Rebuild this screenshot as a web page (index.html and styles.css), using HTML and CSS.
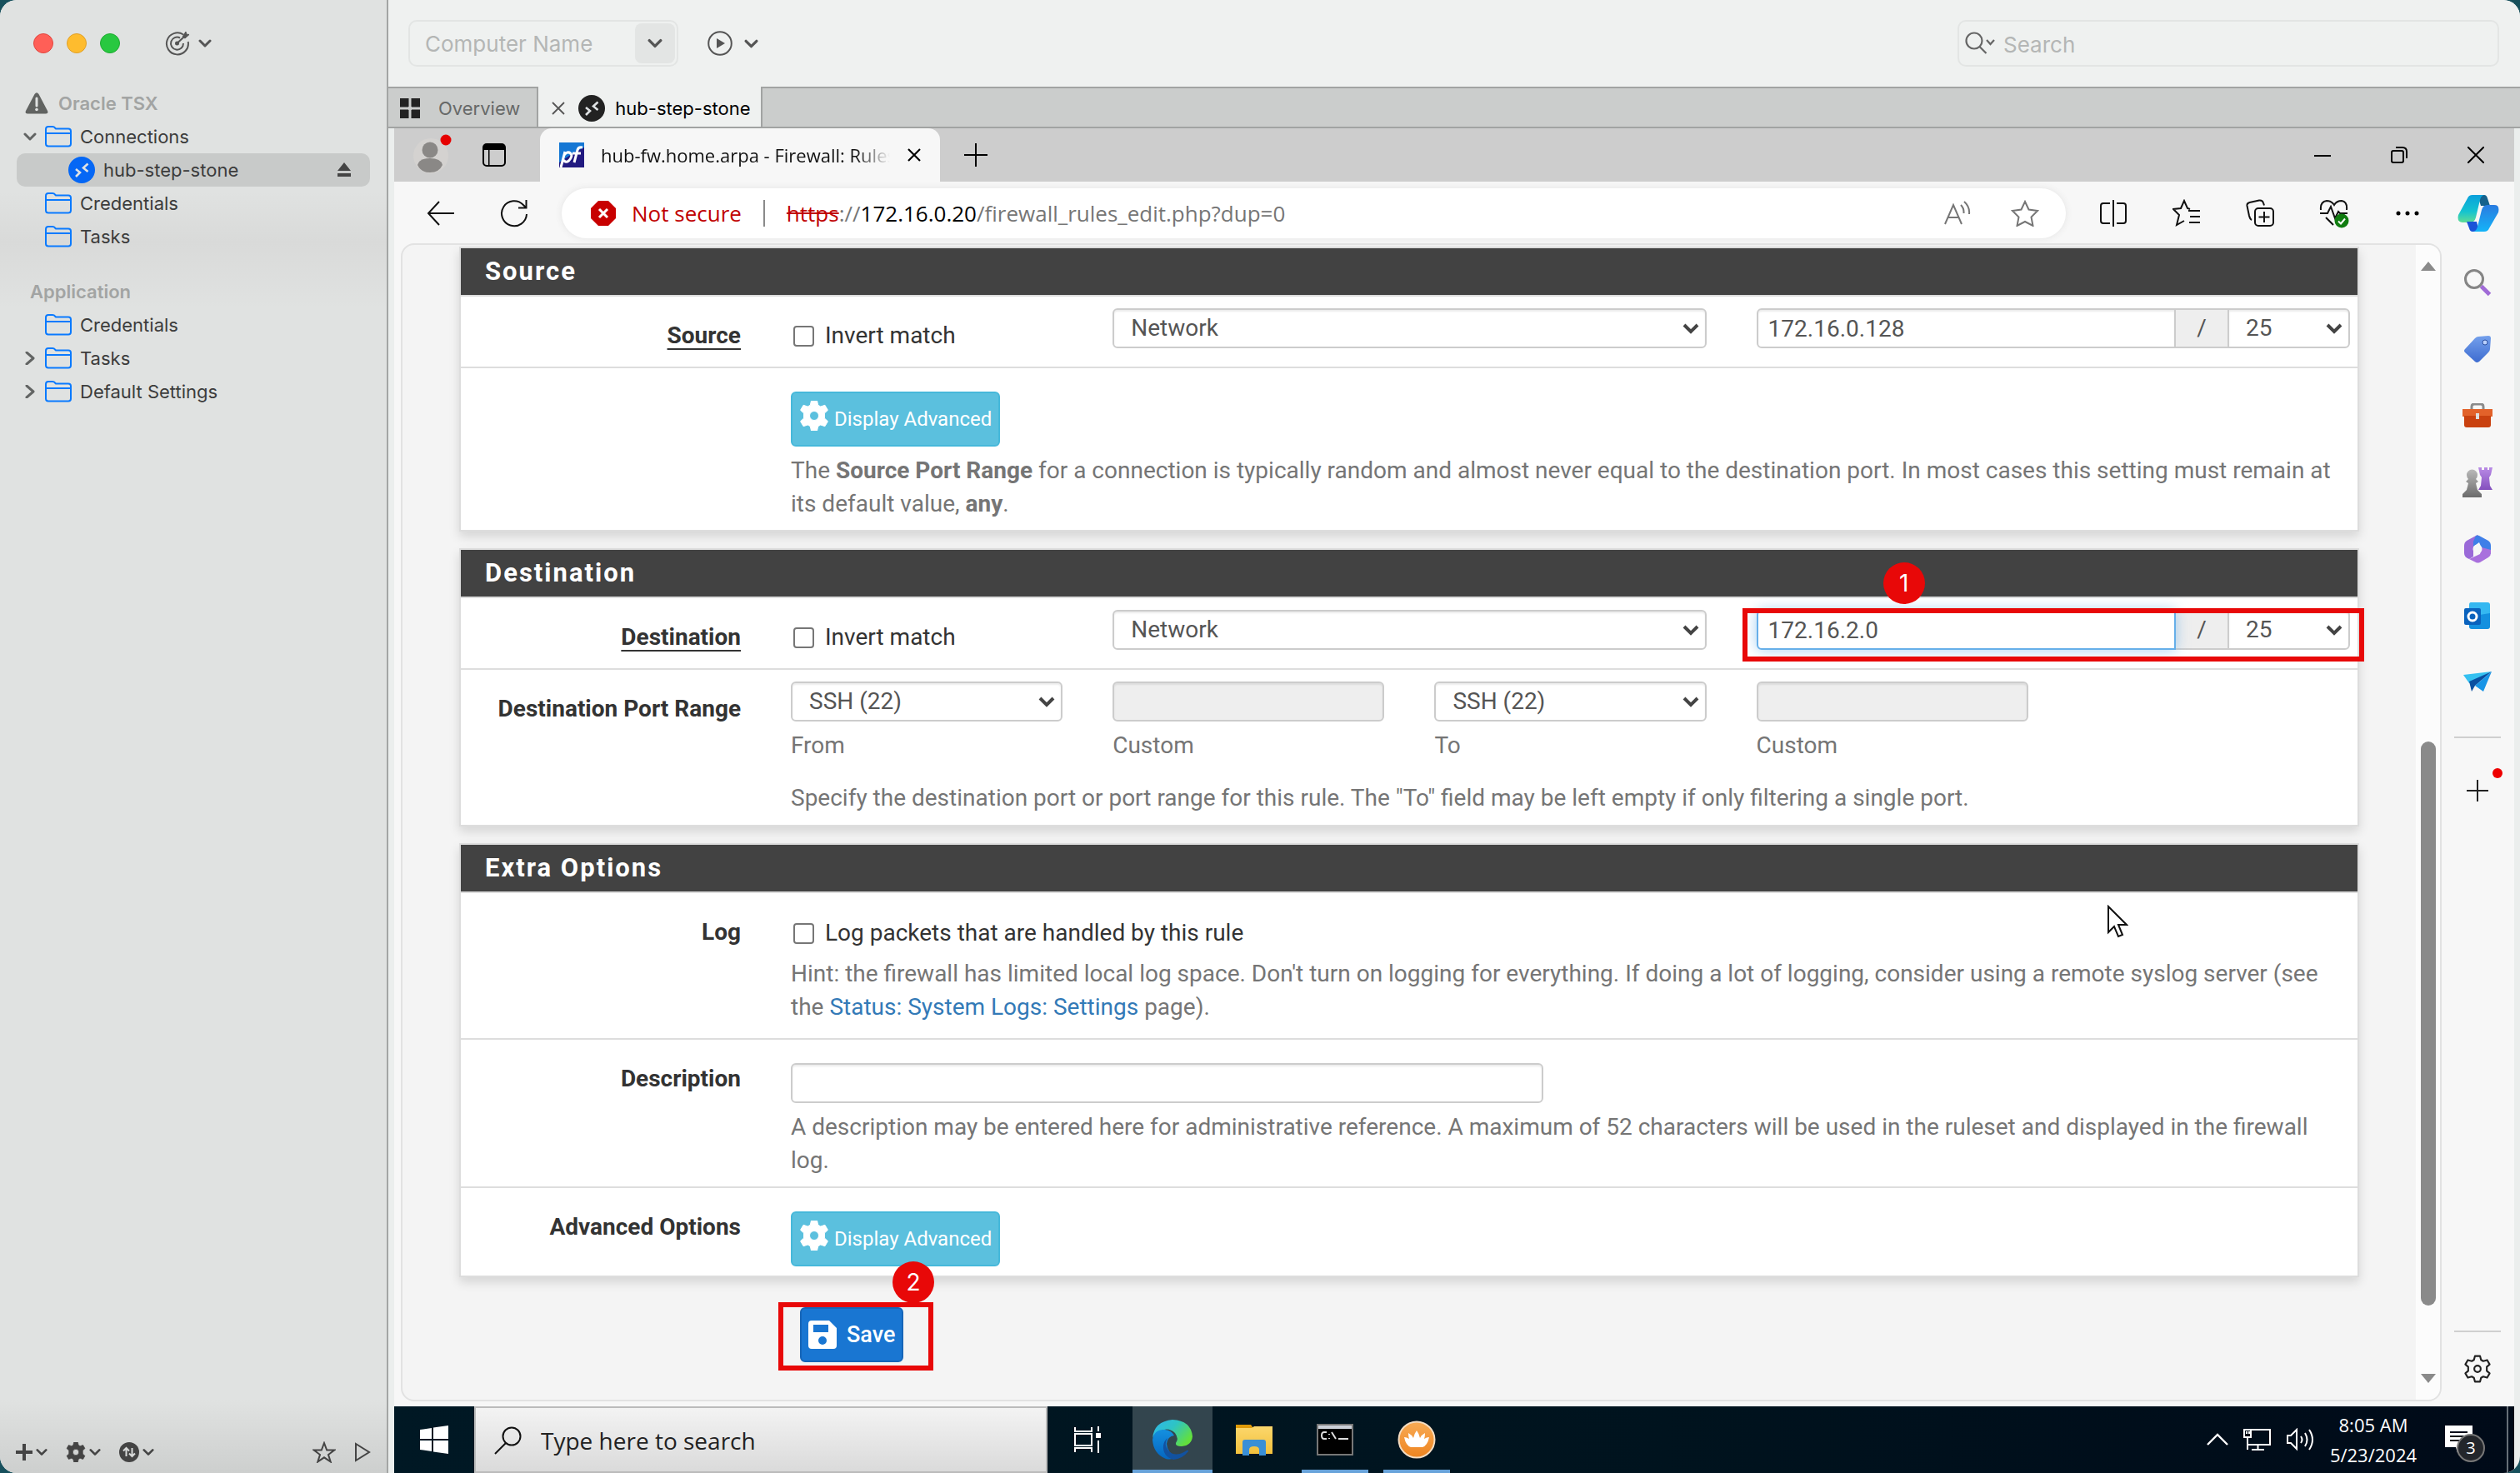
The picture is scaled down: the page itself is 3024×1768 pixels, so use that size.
FILE: index.html
```
<!DOCTYPE html>
<html lang="en">
<head>
<meta charset="utf-8">
<title>hub-step-stone</title>
<link rel="stylesheet" href="styles.css">
</head>
<body>
<svg class="defs" aria-hidden="true">
  <defs>
    <linearGradient id="g-teal" x1="0" y1="0" x2="0" y2="1"><stop offset="0" stop-color="#0aa0dc"/><stop offset=".6" stop-color="#14c3d0"/><stop offset="1" stop-color="#5fdc96"/></linearGradient>
    <linearGradient id="g-blue" x1="0" y1="0" x2="0" y2="1"><stop offset="0" stop-color="#2a7be0"/><stop offset="1" stop-color="#14b4f8"/></linearGradient>
    <linearGradient id="g-edge" x1="0" y1="0" x2="1" y2=".6"><stop offset="0" stop-color="#2fb6ee"/><stop offset=".5" stop-color="#2ec4c4"/><stop offset="1" stop-color="#63e03c"/></linearGradient>
    <linearGradient id="g-edge2" x1="0" y1="0" x2="0" y2="1"><stop offset="0" stop-color="#1490df"/><stop offset="1" stop-color="#0566c0"/></linearGradient>
    <linearGradient id="g-purple" x1="0" y1="0" x2="0" y2="1"><stop offset="0" stop-color="#b98be6"/><stop offset="1" stop-color="#8450bd"/></linearGradient>
    <linearGradient id="g-grey" x1="0" y1="0" x2="0" y2="1"><stop offset="0" stop-color="#b9b9b9"/><stop offset="1" stop-color="#6b6b6b"/></linearGradient>
    <linearGradient id="g-tag" x1="0" y1="0" x2="0" y2="1"><stop offset="0" stop-color="#74a0ec"/><stop offset="1" stop-color="#3e6cd0"/></linearGradient>
    <linearGradient id="g-orange" x1="0" y1="0" x2="0" y2="1"><stop offset="0" stop-color="#f8ab55"/><stop offset="1" stop-color="#ee8420"/></linearGradient>
    <linearGradient id="g-folder" x1="0" y1="0" x2="0" y2="1"><stop offset="0" stop-color="#fcd76c"/><stop offset="1" stop-color="#f2c03c"/></linearGradient>
    <symbol id="down" viewBox="0 0 16 16"><path d="M2 5l6 6 6-6" fill="none" stroke="currentColor" stroke-width="3" stroke-linecap="round" stroke-linejoin="round"/></symbol>
    <symbol id="right" viewBox="0 0 16 16"><path d="M4 1l8 7-8 7" fill="none" stroke="currentColor" stroke-width="3" stroke-linecap="round" stroke-linejoin="round"/></symbol>
    <symbol id="folder" viewBox="0 0 32 26"><path d="M1 9V4q0-3 3-3h5q2 0 3 1.500l1 1h15q3 0 3 3v15q0 3-3 3H4q-3 0-3-3zM1 9h30" fill="none" stroke="#0a7aff" stroke-width="2"/></symbol>
    <symbol id="rdp" viewBox="0 0 32 32"><circle cx="16" cy="16" r="16" fill="currentColor"/><path d="M9 15l5 4-5 5M23.500 8.500L18 13.500l5.500 4.500" fill="none" stroke="#dfe2e4" stroke-width="2.600"/></symbol>
    <symbol id="gear" viewBox="0 0 36 36"><path fill-rule="evenodd" d="M14.500 0h7l1.200 5.300 3 1.700 5.200-1.700 3.500 6-4 3.700v6l4 3.700-3.500 6-5.200-1.700-3 1.700-1.200 5.300h-7l-1.200-5.300-3-1.700-5.200 1.700-3.500-6 4-3.700v-6l-4-3.700 3.500-6L10.300 7l3-1.700zM18 12.500a5.500 5.500 0 1 0 0 11 5.500 5.500 0 0 0 0-11z" fill="currentColor" stroke="currentColor" stroke-width="1" stroke-linejoin="round"/></symbol>
  </defs>
</svg>

<div class="app">
  <nav class="sidebar" aria-label="Connections">
    <div class="window-bar">
      <button class="light light-red" aria-label="Close"></button>
      <button class="light light-amber" aria-label="Minimize"></button>
      <button class="light light-green" aria-label="Zoom"></button>
      <button class="plain target" aria-label="Target">
        <svg width="30" height="30" viewBox="0 0 30 30" fill="none" stroke="currentColor" stroke-width="2"><path d="M22 4.500A13 13 0 1 0 27.700 13"/><path d="M18 8.500A7.500 7.500 0 1 0 22 15"/><circle cx="14.500" cy="15" r="1.500" fill="currentColor"/><path d="M14.500 15L23 7"/><path d="M21 7l4-6 .5 3 3.500.5-5 4.500z" fill="currentColor" stroke-width="1"/></svg>
        <svg width="16" height="16"><use href="#down"/></svg>
      </button>
    </div>
    <div class="tree">
      <h2 class="group group-first">
        <svg width="28" height="26" viewBox="0 0 28 26"><path d="M11.500 2q2.500-3.500 5 0l10.500 20q1.500 3.500-2 3.500H3q-3.500 0-2-3.500z" fill="#616361"/><path d="M14 7v9" stroke="#e0e2e1" stroke-width="3" stroke-linecap="round"/><circle cx="14" cy="20.500" r="1.800" fill="#e0e2e1"/></svg>
        Oracle TSX</h2>
      <a class="node" href="#"><svg class="twist" width="16" height="16"><use href="#down"/></svg><svg width="32" height="26"><use href="#folder"/></svg>Connections</a>
      <a class="node node-selected" href="#"><svg class="rdp" width="32" height="32"><use href="#rdp"/></svg>hub-step-stone<svg class="eject" width="18" height="20" viewBox="0 0 18 20"><path d="M9 1l8 10H1zM1 14h16v4H1z" fill="#444"/></svg></a>
      <a class="node" href="#"><span class="twist"></span><svg width="32" height="26"><use href="#folder"/></svg>Credentials</a>
      <a class="node" href="#"><span class="twist"></span><svg width="32" height="26"><use href="#folder"/></svg>Tasks</a>
      <h2 class="group">Application</h2>
      <a class="node" href="#"><span class="twist"></span><svg width="32" height="26"><use href="#folder"/></svg>Credentials</a>
      <a class="node" href="#"><svg class="twist" width="16" height="16"><use href="#right"/></svg><svg width="32" height="26"><use href="#folder"/></svg>Tasks</a>
      <a class="node" href="#"><svg class="twist" width="16" height="16"><use href="#right"/></svg><svg width="32" height="26"><use href="#folder"/></svg>Default Settings</a>
    </div>
    <div class="side-tools">
      <button class="plain" aria-label="Add"><svg width="20" height="20" viewBox="0 0 20 20"><path d="M10 0v20M0 10h20" stroke="currentColor" stroke-width="4"/></svg><svg width="14" height="14"><use href="#down"/></svg></button>
      <button class="plain" aria-label="Settings"><svg width="24" height="24"><use href="#gear"/></svg><svg width="14" height="14"><use href="#down"/></svg></button>
      <button class="plain" aria-label="Sort"><svg width="24" height="24" viewBox="0 0 24 24"><circle cx="12" cy="12" r="12" fill="currentColor"/><path d="M8.500 17V7M5 10.500L8.500 7l3.500 3.500M15.500 7v10M12 13.500l3.500 3.500 3.500-3.500" fill="none" stroke="#d8dad9" stroke-width="2"/></svg><svg width="14" height="14"><use href="#down"/></svg></button>
      <button class="plain push" aria-label="Favorite"><svg width="28" height="26" viewBox="0 0 28 26"><path d="M14 2l3.200 8.500h9l-7.200 5.500 2.700 8.500-7.700-5.200-7.700 5.200L9 16l-7.200-5.500h9z" fill="none" stroke="currentColor" stroke-width="2"/></svg></button>
      <button class="plain" aria-label="Run"><svg width="20" height="24" viewBox="0 0 20 24"><path d="M2 2v20l16-10z" fill="none" stroke="currentColor" stroke-width="2"/></svg></button>
    </div>
  </nav>

  <main class="main">
    <header class="toolbar">
      <div class="computer">
        <input type="text" placeholder="Computer Name" aria-label="Computer Name">
        <button class="computer-drop" aria-label="Choose computer"><svg width="18" height="18"><use href="#down"/></svg></button>
      </div>
      <button class="plain play" aria-label="Connect">
        <svg width="30" height="30" viewBox="0 0 30 30"><circle cx="15" cy="15" r="13.800" fill="none" stroke="currentColor" stroke-width="2"/><path d="M11 9v12l10-6z" fill="currentColor"/></svg>
        <svg width="17" height="17"><use href="#down"/></svg>
      </button>
      <label class="search">
        <svg width="38" height="30" viewBox="0 0 38 30" fill="none" stroke="#666" stroke-width="2.200"><circle cx="11" cy="11" r="9.500"/><path d="M17.500 18l8 8M26 10l4.500 5 4.500-5"/></svg>
        <input type="search" placeholder="Search" aria-label="Search">
      </label>
    </header>
    <div class="tabs">
      <button class="tab"><svg width="24" height="24" viewBox="0 0 24 24"><path d="M0 0h10v10H0zM14 0h10v10H14zM0 14h10v10H0zM14 14h10v10H14z" fill="#222" stroke="#222" stroke-linejoin="round"/></svg>Overview</button>
      <button class="tab tab-active"><svg class="tab-close" width="16" height="16" viewBox="0 0 16 16"><path d="M1 1l14 14M15 1L1 15" stroke="#555" stroke-width="1.800"/></svg><svg class="dark" width="32" height="32"><use href="#rdp"/></svg>hub-step-stone</button>
    </div>

    <section class="remote">
      <div class="titlebar">
        <button class="plain person" aria-label="Profile"><svg width="52" height="52" viewBox="0 0 52 52"><circle cx="24" cy="27" r="21" fill="#d4d2d0"/><circle cx="23" cy="20" r="9.500" fill="#8a8886"/><path d="M8 38q2-8 15-8t15 8q-4 9-15 9T8 38z" fill="#8a8886"/><circle cx="42" cy="8" r="6.500" fill="#e60000"/></svg></button>
        <button class="plain" aria-label="Workspaces"><svg width="30" height="30" viewBox="0 0 30 30"><rect x="2" y="2" width="26" height="26" rx="4" fill="none" stroke="#000" stroke-width="2"/><path d="M2 9V5q0-3 3-3h20q3 0 3 3v4zM8 9h1.500v19H8z"/></svg></button>
        <div class="page-tab">
          <svg width="30" height="30" viewBox="0 0 30 30"><path d="M0 0h30v30H0z" fill="#221a80"/><path d="M0 0h30v6L18 12 0 24z" fill="#1577d4"/><path d="M2 30L7 11M6 15q4-5 7.500-2t-2 9q-4 3-6-1M18 24l4-15q1-4 6-3M16 13h10" fill="none" stroke="#fff" stroke-width="3"/></svg>
          <span class="page-title">hub-fw.home.arpa - Firewall: Rules</span>
          <button class="plain" aria-label="Close tab"><svg width="18" height="18" viewBox="0 0 18 18"><path d="M2 2l14 14M16 2L2 16" stroke="#000" stroke-width="2.200"/></svg></button>
        </div>
        <button class="plain new-tab" aria-label="New tab"><svg width="30" height="30" viewBox="0 0 30 30"><path d="M15 1v28M1 15h28" stroke="#000" stroke-width="2"/></svg></button>
        <div class="win-controls">
          <button class="plain" aria-label="Minimize"><svg width="20" height="20" viewBox="0 0 20 20"><path d="M0 11h20" stroke="#000" stroke-width="2"/></svg></button>
          <button class="plain" aria-label="Restore"><svg width="20" height="20" viewBox="0 0 20 20" fill="none" stroke="#000" stroke-width="2"><rect x="1" y="5" width="14" height="14" rx="2"/><path d="M6 1h8q5 0 5 5v8"/></svg></button>
          <button class="plain" aria-label="Close"><svg width="20" height="20" viewBox="0 0 20 20"><path d="M0 0l20 20M20 0L0 20" stroke="#000" stroke-width="2"/></svg></button>
        </div>
      </div>
      <div class="address">
        <button class="plain" aria-label="Back"><svg width="34" height="30" viewBox="0 0 34 30"><path d="M33 15H2M15 1L2 15l13 14" fill="none" stroke="#111" stroke-width="2"/></svg></button>
        <button class="plain" aria-label="Reload"><svg width="34" height="34" viewBox="0 0 34 34"><path d="M32 18A15 15 0 1 1 28 7l3 3M31.500 1v9.500H22" fill="none" stroke="#111" stroke-width="2"/></svg></button>
        <div class="omnibox">
          <svg width="32" height="32" viewBox="0 0 32 32"><path d="M10 1h12l9 9v12l-9 9H10l-9-9V10z" fill="#c80000"/><path d="M11 11l10 10M21 11L11 21" stroke="#fff" stroke-width="3"/></svg>
          <span class="insecure">Not secure</span>
          <span class="url"><s>https</s>://<b>172.16.0.20</b>/firewall_rules_edit.php?dup=0</span>
          <button class="plain grey" aria-label="Read aloud"><svg width="34" height="32" viewBox="0 0 34 32" fill="none" stroke="currentColor" stroke-width="2"><path d="M1 29L11 6l10 23M5 21h12M20 6q4 4 3.500 10M24 2q7 6 6 15"/></svg></button>
          <button class="plain grey" aria-label="Add to favorites"><svg width="34" height="32" viewBox="0 0 34 32" fill="none" stroke="currentColor" stroke-width="2"><path d="M17 2l4.500 9.500L32 13l-7.500 7.500 2 10.500-9.500-5-9.500 5 2-10.500L2 13l10.500-1.500z"/></svg></button>
        </div>
        <div class="browser-tools">
          <button class="plain" aria-label="Split screen"><svg width="34" height="34" viewBox="0 0 34 34" fill="none" stroke="#111" stroke-width="2"><path d="M13 5H5q-3 0-3 3v18q0 3 3 3h8M21 5h8q3 0 3 3v18q0 3-3 3h-8M17 1v32"/></svg></button>
          <button class="plain" aria-label="Favorites"><svg width="34" height="34" viewBox="0 0 34 34" fill="none" stroke="#111" stroke-width="2"><path d="M21 12l-3-1-4-9-4 9-9 1 7 7-3 12 9-5M19 14h14M21 21h12M20 28h13"/></svg></button>
          <button class="plain" aria-label="Collections"><svg width="34" height="34" viewBox="0 0 34 34" fill="none" stroke="#111" stroke-width="2"><rect x="11" y="11" width="22" height="21" rx="4"/><path d="M22 15v13M15.500 21.500h13M7 25q-2-1-3-5L1.500 8q-.5-3 3-4L16 1.500q4-.5 5 3l1 3"/></svg></button>
          <button class="plain" aria-label="Browser essentials"><svg width="36" height="36" viewBox="0 0 36 36" fill="none" stroke="#111" stroke-width="2"><path d="M2 14Q1 4 9 3q6 0 9 5 3-5 9-5 7 1 6 11M1 18h9l4-8 5 14 4-8 2 2h9M8 23l9 9"/><circle cx="27" cy="27" r="8.500" fill="#107c10" stroke="none"/><path d="M23 27.500l3 3 5-6" stroke="#fff"/></svg></button>
          <button class="plain" aria-label="More"><svg width="34" height="34" viewBox="0 0 34 34"><circle cx="5" cy="17" r="2.500"/><circle cx="16" cy="17" r="2.500"/><circle cx="27" cy="17" r="2.500"/></svg></button>
          <button class="plain copilot" aria-label="Copilot"><svg width="50" height="46" viewBox="0 0 50 46"><path d="M24 1h8q3 0 4 4l3 9H28z" fill="#15618c"/><path d="M12 5q1.500-4 6-4h14q-4 1-5 6l-5 21q-1.500 6-7 6H6q-7 0-5-9z" fill="url(#g-teal)"/><path d="M26 45h-8q-3 0-4-4l-3-8h12z" fill="#1a54d8"/><path d="M38 41q-1.500 4-6 4H19q4-1 5-6l5-20q1.500-6 7-6h8q7 0 5 9z" fill="url(#g-blue)"/></svg></button>
        </div>
      </div>

      <div class="viewport">
        <div class="page">
          <form class="content" onsubmit="return false">
            <section class="panel">
              <h2>Source</h2>
              <div class="row">
                <span class="row-label"><u>Source</u></span>
                <div class="row-body">
                  <label class="check"><input type="checkbox">Invert match</label>
                  <select class="span2" aria-label="Source type"><option>Network</option></select>
                  <div class="group-input span2">
                    <input type="text" value="172.16.0.128" aria-label="Source address"><span class="slash">/</span><select aria-label="Source mask"><option>25</option></select>
                  </div>
                </div>
              </div>
              <div class="row">
                <span class="row-label"></span>
                <div class="row-stack">
                  <button class="btn-info"><svg width="36" height="36"><use href="#gear"/></svg>Display Advanced</button>
                  <p>The <b>Source Port Range</b> for a connection is typically random and almost never equal to the destination port. In most cases this setting must remain at its default value, <b>any</b>.</p>
                </div>
              </div>
            </section>

            <section class="panel">
              <h2>Destination</h2>
              <div class="row">
                <span class="row-label"><u>Destination</u></span>
                <div class="row-body">
                  <label class="check"><input type="checkbox">Invert match</label>
                  <select class="span2" aria-label="Destination type"><option>Network</option></select>
                  <div class="group-input span2">
                    <input class="focused" type="text" value="172.16.2.0" aria-label="Destination address"><span class="slash">/</span><select aria-label="Destination mask"><option>25</option></select>
                    <span class="mark mark-address"></span><span class="step step-one">1</span>
                  </div>
                </div>
              </div>
              <div class="row">
                <span class="row-label">Destination Port Range</span>
                <div class="ports">
                  <div class="row-body">
                    <div class="field"><select id="from"><option>SSH (22)</option></select><label for="from">From</label></div>
                    <div class="field"><input id="from-custom" type="text" disabled><label for="from-custom">Custom</label></div>
                    <div class="field"><select id="to"><option>SSH (22)</option></select><label for="to">To</label></div>
                    <div class="field"><input id="to-custom" type="text" disabled><label for="to-custom">Custom</label></div>
                  </div>
                  <p>Specify the destination port or port range for this rule. The "To" field may be left empty if only filtering a single port.</p>
                </div>
              </div>
            </section>

            <section class="panel">
              <h2>Extra Options</h2>
              <div class="row row-log">
                <span class="row-label">Log</span>
                <div class="row-stack">
                  <label class="check"><input type="checkbox">Log packets that are handled by this rule</label>
                  <p>Hint: the firewall has limited local log space. Don't turn on logging for everything. If doing a lot of logging, consider using a remote syslog server (see the <a href="#">Status: System Logs: Settings</a> page).</p>
                </div>
              </div>
              <div class="row">
                <label class="row-label" for="descr">Description</label>
                <div class="row-stack">
                  <div class="descr"><input id="descr" type="text"></div>
                  <p>A description may be entered here for administrative reference. A maximum of 52 characters will be used in the ruleset and displayed in the firewall log.</p>
                </div>
              </div>
              <div class="row">
                <span class="row-label">Advanced Options</span>
                <div class="row-stack">
                  <button class="btn-info"><svg width="36" height="36"><use href="#gear"/></svg>Display Advanced</button>
                </div>
              </div>
            </section>

            <div class="actions">
              <button class="btn-save" type="submit"><svg width="34" height="34" viewBox="0 0 34 34"><path fill-rule="evenodd" d="M4 0h21l9 9v21q0 4-4 4H4q-4 0-4-4V4q0-4 4-4zM6 5v9h18V5zM17 19a5 5 0 1 0 0 10 5 5 0 0 0 0-10z" fill="#fff"/></svg>Save</button>
              <span class="mark mark-save"></span><span class="step step-two">2</span>
            </div>
            <svg class="cursor" width="26" height="40" viewBox="0 0 26 40"><path d="M2 2v31l7-7 5 12 5-2-5-12h10z" fill="#fff" stroke="#111" stroke-width="2"/></svg>
          </form>
          <div class="scrollbar" aria-hidden="true"><i class="arrow-up"></i><i class="thumb"></i><i class="arrow-down"></i></div>
        </div>

        <aside class="edge-bar">
          <button class="plain" aria-label="Search"><svg width="34" height="34" viewBox="0 0 34 34" fill="none"><circle cx="13" cy="13" r="10.500" stroke="#858585" stroke-width="3"/><path d="M21.500 21.500l10 10" stroke="#a06bd6" stroke-width="5"/></svg></button>
          <button class="plain" aria-label="Shopping"><svg width="34" height="34" viewBox="0 0 34 34"><path d="M18 2l12-1q3 0 3 3l-1 13q0 2-2 4L19 32q-3 2-5 0L2 21q-2-2 0-4L14 4q2-2 4-2z" fill="url(#g-tag)"/><circle cx="26" cy="9" r="3" fill="#b9d0ff" stroke="#2d50a0"/></svg></button>
          <button class="plain" aria-label="Tools"><svg width="36" height="30" viewBox="0 0 36 30"><path d="M11 8V4q0-3 3-3h8q3 0 3 3v4" fill="none" stroke="#8b8b8b" stroke-width="3"/><path d="M0 7h36v9H0z" fill="#e2622a"/><path d="M2 15h32v11q0 3-3 3H5q-3 0-3-3z" fill="#c9410f"/><path d="M16 12h4v7h-4z" fill="#ddd"/></svg></button>
          <button class="plain" aria-label="Games"><svg width="36" height="38" viewBox="0 0 36 38"><path d="M19 1h4v3h3V1h4v3h2V1h4l-2 9-2 3 1 10 3 5H19l3-5 1-10-2-3z" fill="url(#g-purple)"/><path d="M5 10a6.500 6.500 0 1 1 13 0q0 3-2 5l3 3-3 2 2 8 5 5v4H0v-4l5-5 2-8-3-2 3-3q-2-2-2-5z" fill="url(#g-grey)"/></svg></button>
          <button class="plain" aria-label="Microsoft 365"><svg width="34" height="34" viewBox="0 0 34 34"><path d="M17 0L4 7q-3 2-3 6v9q0 5 6 7l5-3V14l9-9z" fill="#9a6ad8"/><path d="M15 1q2-1 4 0l11 6q3 2 3 6v10l-11-7-3-7-7 5V8z" fill="#3f7fe8"/><path d="M33 18v4q0 3-3 5l-10 6q-3 1-5 0L7 29l13-6 2-8z" fill="#a970dd"/><circle cx="17" cy="17" r="5.500" fill="#f7f7f7"/></svg></button>
          <button class="plain" aria-label="Outlook"><svg width="34" height="34" viewBox="0 0 34 34"><path d="M9 1h20q3 0 3 3v14H7V4q0-3 2-3z" fill="#35b8f1"/><path d="M7 18l25-4v16q0 3-3 3H10q-3 0-3-3z" fill="#1490df"/><rect x="1" y="8" width="20" height="20" rx="2" fill="#0a62bd"/><circle cx="11" cy="18" r="5" fill="none" stroke="#fff" stroke-width="3"/></svg></button>
          <button class="plain" aria-label="Drop"><svg width="34" height="26" viewBox="0 0 34 26"><path d="M0 4L34 0 7 14z" fill="#35c1f1"/><path d="M34 0L7 12l3 12 4-7z" fill="#0a4fa0"/><path d="M34 0L14 17l10 7z" fill="#1894e6"/></svg></button>
          <hr>
          <button class="plain add" aria-label="Customize"><svg width="26" height="26" viewBox="0 0 26 26"><path d="M13 0v26M0 13h26" stroke="#222" stroke-width="2"/></svg><i class="dot"></i></button>
          <hr class="bottom-rule">
          <button class="plain" aria-label="Settings"><svg width="36" height="36" viewBox="-3 -3 42 42" fill="none" stroke="#222" stroke-width="2.500" stroke-linejoin="round"><path d="M14.500 0h7l1.500 5.500 3 1.700 5.500-1.500 3.500 6-4 3.500v5.600l4 3.500-3.500 6-5.500-1.500-3 1.700-1.500 5.500h-7L13 30.500l-3-1.700-5.500 1.500-3.500-6 4-3.500v-5.600l-4-3.500 3.500-6L10 7.200l3-1.700z"/><circle cx="18" cy="18" r="4.500"/></svg></button>
        </aside>
      </div>

      <footer class="taskbar">
        <button class="plain start" aria-label="Start"><svg width="34" height="34" viewBox="0 0 34 34"><path d="M0 5l14-2v13H0zM16 2.500L34 0v16H16zM0 18h14v13L0 29zM16 18h18v16l-18-2.500z" fill="#fff"/></svg></button>
        <label class="task-search"><svg width="34" height="34" viewBox="0 0 34 34" fill="none" stroke="#111" stroke-width="2"><circle cx="21" cy="12" r="10.500"/><path d="M14 20L1 33"/></svg><input type="text" placeholder="Type here to search" aria-label="Type here to search"></label>
        <button class="plain tile tile-wide" aria-label="Task view"><svg width="34" height="32" viewBox="0 0 34 32" fill="none" stroke="#fff" stroke-width="2"><rect x="2" y="9" width="20" height="14"/><path d="M2 1v5h20V1M2 31v-5h20v5M30 0v6M30 17v15"/><path d="M27 8h6v6h-6z" fill="#fff" stroke="none"/></svg></button>
        <button class="plain tile tile-current" aria-label="Edge"><svg width="48" height="48" viewBox="0 0 48 48"><path d="M0 22Q2 2 24 0q22 1 24 20-1 11-13 12-8 0-7-4 4-5-1-12-8-8-19-2Q2 17 0 22z" fill="url(#g-edge)"/><path d="M0 24Q2 11 15 12q8 1 11 7-8 1-9 10 1 12 12 15-5 5-13 3Q1 41 0 24z" fill="url(#g-edge2)"/><path d="M18 22q-5 8 1 15 8 9 22 0 3-1 2 1-7 9-18 10-13-4-12-17 1-6 5-9z" fill="#1252a0"/></svg></button>
        <button class="plain tile tile-plain" aria-label="File Explorer"><svg width="44" height="38" viewBox="0 0 44 38"><path d="M0 1h18l3 4H0z" fill="#e09a08"/><path d="M0 5h19l3-2h22v33H0z" fill="url(#g-folder)"/><path d="M8 38V22q0-3 3-3h22q3 0 3 3v16h-8v-7q0-4-6-4t-6 4v7z" fill="#3a8fd6"/></svg></button>
        <button class="plain tile tile-open" aria-label="Command Prompt"><svg width="44" height="38" viewBox="0 0 44 38"><path d="M1 1h42v36H1z" fill="#000" stroke="#777" stroke-width="2"/><path d="M2 2h40v4H2z" fill="#ccd0d8"/><path d="M12 10h-3q-3 0-3 4t3 4h3M15 12v1M15 17v1M18 10l5 8M26 18h12" fill="none" stroke="#ddd" stroke-width="2"/></svg></button>
        <button class="plain tile tile-open" aria-label="Lotus"><svg width="46" height="46" viewBox="0 0 46 46"><circle cx="23" cy="23" r="21.500" fill="url(#g-orange)" stroke="#f3dcc2" stroke-width="2"/><path d="M23 12q3 4 4 9 2-4 6-6 0 4-1 7 3-2 6-2-2 10-8 12H16Q10 30 8 20q3 0 6 2-1-3-1-7 4 2 6 6 1-5 4-9z" fill="#fff"/></svg></button>
        <div class="tray">
          <button class="plain" aria-label="Show hidden icons"><svg width="26" height="16" viewBox="0 0 26 16"><path d="M1 14L13 2l12 12" fill="none" stroke="#fff" stroke-width="2.400"/></svg></button>
          <button class="plain" aria-label="Network"><svg width="34" height="28" viewBox="0 0 34 28" fill="none" stroke="#fff" stroke-width="2"><path d="M10 2h22v18H6M1 2h8v9H1zM5 11v15M10 26h15M17.500 20v6M4 4v3M7 4v3"/></svg></button>
          <button class="plain" aria-label="Volume"><svg width="34" height="28" viewBox="0 0 34 28" fill="none" stroke="#fff" stroke-width="2"><path d="M1 9v9h4l7 7V2L5 9zM17 10q3 4 0 8M22 6q5 8 0 16M27 2q8 12 0 24"/></svg></button>
          <time class="clock">8:05 AM<br>5/23/2024</time>
          <button class="plain notes" aria-label="Notifications"><svg width="34" height="34" viewBox="0 0 34 34"><path d="M0 0h33v26H22l-7 7-2-7H0z" fill="#fff"/><path d="M6 8h21M6 13h21M6 18h21" stroke="#020a18" stroke-width="2"/></svg><span class="count">3</span></button>
          <i class="peek"></i>
        </div>
      </footer>
    </section>
  </main>
</div>
</body>
</html>
```
FILE: styles.css
```
* { box-sizing: border-box; }

body {
  margin: 0;
  background: #17505c;
  font-family: Inter, "Liberation Sans", sans-serif;
  font-size: 22px;
  color: #3c3c3c;
}

.defs { position: absolute; width: 0; height: 0; }
svg { flex: none; display: block; }
input, select, button { font: inherit; color: inherit; margin: 0; }

.plain {
  display: flex;
  align-items: center;
  padding: 0;
  border: 0;
  background: none;
}

.app {
  display: flex;
  height: 100vh;
  border-radius: 20px;
  overflow: hidden;
  background: #ebeeed;
}

/* Connection list */
.sidebar {
  display: flex;
  flex-direction: column;
  width: 466px;
  flex: none;
  border-right: 2px solid #a3a5a4;
  background: linear-gradient(#e0e2e1 230px, #d9dad9 290px, #e0e2e1 370px, #e0e2e1 1680px, #cdcfce);
}
.window-bar { display: flex; align-items: center; gap: 16px; height: 104px; padding-left: 40px; }
.light { width: 24px; height: 24px; padding: 0; border: 1px solid; border-radius: 50%; }
.light-red { background: #ff5f57; border-color: #e2463f; }
.light-amber { background: #febc2e; border-color: #e0a028; }
.light-green { background: #28c840; border-color: #1dab2f; }
.target { gap: 10px; margin-left: 38px; color: #555; }
.tree { flex: 1; }
.group {
  display: flex;
  align-items: center;
  gap: 12px;
  height: 40px;
  margin: 26px 0 0;
  padding: 0 36px;
  font-size: 22px;
  font-weight: 600;
  color: #a2a4a3;
}
.group-first { margin: 0; padding: 0 30px; }
.node {
  display: flex;
  align-items: center;
  gap: 10px;
  height: 40px;
  margin: 0 20px;
  padding: 0 22px 0 8px;
  border-radius: 10px;
  color: #3c3c3c;
  text-decoration: none;
}
.node-selected { background: #c8cac9; padding-left: 62px; }
.rdp { color: #0567f5; }
.dark { color: #222; }
.twist { width: 16px; color: #626463; }
.eject { margin-left: auto; }
.side-tools { display: flex; align-items: center; gap: 22px; height: 50px; padding: 0 19px; color: #444; }
.side-tools .plain { gap: 4px; }
.side-tools .push { margin-left: auto; }

/* Main toolbar */
.main { display: flex; flex-direction: column; flex: 1; min-width: 0; }
.toolbar {
  display: flex;
  align-items: center;
  height: 104px;
  padding: 0 25px 0 24px;
  background: #eff1f0;
  font-size: 26px;
}
.toolbar input { flex: 1; min-width: 0; border: 0; outline: 0; padding: 0; background: none; }
.toolbar input::placeholder { color: #b4b6b5; opacity: 1; }
.computer {
  display: flex;
  width: 324px;
  height: 56px;
  padding: 2px 2px 2px 18px;
  border: 2px solid #e3e5e4;
  border-radius: 10px;
}
.computer-drop { display: grid; place-items: center; width: 48px; padding: 0; border: 0; border-radius: 8px; background: #e3e5e4; color: #555; }
.play { gap: 14px; margin-left: 35px; color: #555; }
.search {
  display: flex;
  align-items: center;
  gap: 8px;
  width: 650px;
  height: 56px;
  margin-left: auto;
  padding: 2px 7px 0;
  border: 2px solid #e3e5e4;
  border-radius: 10px;
}
.tabs {
  display: flex;
  height: 50px;
  border-top: 2px solid #a1a3a2;
  border-bottom: 2px solid #a1a3a2;
  background: #cbcdcc;
}
.tab {
  display: flex;
  align-items: center;
  gap: 22px;
  padding: 2px 20px 0 14px;
  border: 0;
  border-right: 2px solid #a1a3a2;
  background: none;
  color: #676968;
}
.tab-active { gap: 12px; margin-top: -2px; padding: 4px 12px 0 16px; background: #eff1f0; color: #000; }
.tab-close { margin-right: 4px; }

/* Remote desktop browser */
.remote {
  display: flex;
  flex-direction: column;
  flex: 1;
  min-height: 0;
  margin: 0 7px;
  background: #f7f7f7;
  font-family: "Open Sans", "Noto Sans", sans-serif;
}
.titlebar { display: flex; align-items: center; height: 64px; padding-left: 20px; background: #cdcdcd; }
.person { margin-right: 33px; }
.page-tab {
  display: flex;
  align-items: center;
  gap: 20px;
  width: 480px;
  height: 64px;
  margin-left: 40px;
  padding: 0 22px 0 23px;
  border-radius: 14px 14px 0 0;
  background: #f7f7f7;
  color: #111;
}
.page-title { flex: 1; overflow: hidden; white-space: nowrap; -webkit-mask-image: linear-gradient(90deg, #000 88%, transparent); mask-image: linear-gradient(90deg, #000 88%, transparent); }
.new-tab { margin-left: 28px; }
.win-controls { display: flex; gap: 72px; margin-left: auto; padding-right: 36px; }
.address { display: flex; align-items: center; gap: 54px; height: 74px; padding: 2px 18px 0 39px; }
.omnibox {
  display: flex;
  align-items: center;
  flex: 1;
  height: 60px;
  margin: 0 -14px;
  padding: 0 32px 0 34px;
  border-radius: 30px;
  background: #fff;
  box-shadow: 0 0 8px #e4e4e4;
  font-size: 26px;
  color: #767676;
}
.insecure { margin-left: 18px; padding-right: 26px; border-right: 2px solid #8a8a8a; line-height: 32px; color: #c00000; }
.url { flex: 1; margin-left: 26px; }
.url s { color: #c00000; }
.url b { font-weight: 400; color: #000; }
.grey { margin-left: 46px; color: #767676; }
.browser-tools { display: flex; align-items: center; gap: 54px; }
.copilot { margin-left: -12px; }
.viewport { display: flex; flex: 1; min-height: 0; }
.page {
  display: flex;
  flex: 1;
  min-width: 0;
  margin: 0 0 6px 8px;
  border: 2px solid #e2e2e2;
  border-radius: 16px;
  overflow: hidden;
  background: #f4f4f4;
}
.scrollbar { display: flex; flex-direction: column; align-items: center; width: 29px; padding: 20px 0; background: #fcfcfc; }
.scrollbar i { border: 9px solid transparent; }
.scrollbar .arrow-up { border-top: 0; border-bottom: 11px solid #8a8a8a; }
.scrollbar .arrow-down { border-bottom: 0; border-top: 11px solid #8a8a8a; }
.scrollbar .thumb { flex: 1; width: 18px; margin: 565px 0 82px; border: 0; border-radius: 9px; background: #8a8a8a; }

/* Firewall rule form */
.content {
  position: relative;
  flex: 1;
  min-width: 0;
  padding: 2px 68px 0;
  font-family: Roboto, "Open Sans", sans-serif;
  font-size: 28px;
  line-height: 40px;
  color: #333;
}
.panel { margin-bottom: 20px; border: 2px solid #ddd; background: #fff; box-shadow: 0 6px 12px rgba(0, 0, 0, .13); }
.panel h2 {
  margin: 0;
  padding-left: 29px;
  background: #424242;
  color: #fff;
  font-size: 31px;
  font-weight: 700;
  letter-spacing: 2px;
  line-height: 56px;
}
.row { display: flex; gap: 60px; padding-right: 9px; border-top: 2px solid #ddd; }
.row-label { flex: none; width: 336px; padding-top: 27px; text-align: right; font-weight: 700; }
.row-label u { text-decoration-thickness: 2px; text-underline-offset: 6px; text-decoration-skip-ink: none; }
.row-body { display: grid; grid-template-columns: repeat(5, minmax(0, 1fr)); column-gap: 60px; align-items: start; flex: 1; padding: 14px 0 17px; }
.row-stack { flex: 1; min-width: 0; padding: 28px 0 11px; }
.row-log .row-stack { padding-bottom: 17px; }
.span2 { grid-column: span 2; }
.check { display: flex; align-items: center; gap: 13px; }
.row-body .check { padding-top: 13px; }
.check input { appearance: none; width: 25px; height: 25px; margin-left: 3px; border: 2px solid #767676; border-radius: 4px; background: #fff; }
.content p { margin: 9px 0 0; color: #757575; }
.content a { color: #337ab7; text-decoration: none; }
.content select, .content input[type="text"] {
  display: block;
  width: 100%;
  height: 48px;
  padding: 0 12px;
  border: 2px solid #ccc;
  border-radius: 6px;
  background: #fff;
  color: #555;
  box-shadow: inset 0 2px 2px rgba(0, 0, 0, .08);
}
.content select {
  appearance: none;
  padding: 0 20px;
  background: #fff url("data:image/svg+xml,%3Csvg xmlns='http://www.w3.org/2000/svg' width='20' height='14'%3E%3Cpath d='M2 3l8 8 8-8' fill='none' stroke='%23444' stroke-width='4'/%3E%3C/svg%3E") no-repeat right 7px center;
}
.content input[type="text"]:disabled { background: #eee; }
.group-input { position: relative; display: flex; }
.content .group-input input { flex: 1; min-width: 0; border-radius: 6px 0 0 6px; }
.content .group-input .focused { border-color: #66afe9; box-shadow: 0 0 16px rgba(102, 175, 233, .6); z-index: 1; }
.slash { width: 62px; border: 2px solid #ccc; border-width: 2px 0; background: #eee; line-height: 44px; text-align: center; color: #555; }
.content .group-input select { width: 147px; border-radius: 0 6px 6px 0; }
.ports { flex: 1; padding-bottom: 12px; }
.ports .row-body { padding-bottom: 14px; }
.field label { display: block; margin-top: 9px; color: #757575; }
.descr { max-width: 903px; }
.btn-info, .btn-save { display: flex; align-items: center; height: 66px; border: 2px solid #46b8da; border-radius: 6px; background: #5bc0de; color: #fff; }
.btn-info { gap: 6px; padding: 0 8px; font-size: 24px; }
.btn-info svg { margin-top: -8px; }
.btn-save { gap: 12px; padding: 0 8px; border-color: #1565b8; background: #1976d2; font-size: 27px; font-weight: 500; }
.actions { position: relative; display: flex; margin-top: 36px; padding-left: 409px; }

/* Numbered walkthrough callouts */
.mark { position: absolute; border: 6px solid #e80808; z-index: 2; }
.step {
  position: absolute;
  width: 50px;
  height: 50px;
  border-radius: 50%;
  background: #e80808;
  color: #fff;
  font-family: Inter, sans-serif;
  line-height: 50px;
  text-align: center;
  z-index: 3;
}
.mark-address { inset: -2px -17px -14px; }
.step-one { left: 152px; top: -57px; }
.mark-save { left: 383px; top: -6px; width: 186px; height: 82px; }
.step-two { left: 520px; top: -55px; }
.cursor { position: absolute; left: 2045px; top: 792px; }

/* Browser side rail */
.edge-bar { display: flex; flex-direction: column; align-items: center; width: 87px; padding: 12px 2px 20px 0; }
.edge-bar .plain { justify-content: center; width: 100%; height: 50px; margin: 10px 0 20px; }
.edge-bar hr { width: 56px; margin: 20px 0 28px; border: 0; border-top: 2px solid #cfcfcf; }
.add { position: relative; }
.dot { position: absolute; right: 12px; top: -2px; width: 12px; height: 12px; border-radius: 50%; background: #e00; }
.edge-bar .bottom-rule { margin: auto 0 0; }
.edge-bar .bottom-rule + .plain { margin: 19px 0 0; }

/* Taskbar */
.taskbar { display: flex; height: 80px; background: linear-gradient(90deg, #001824, #00131e 60%, #000a18); color: #fff; }
.start { justify-content: center; width: 96px; }
.task-search {
  display: flex;
  align-items: center;
  gap: 22px;
  width: 688px;
  padding: 2px 22px 0;
  border: 2px solid #bbb;
  background: linear-gradient(#f3f3f3, #dadada);
  color: #222;
  font-size: 28px;
}
.task-search input { flex: 1; border: 0; padding: 0; background: none; }
.task-search input::placeholder { color: #222; opacity: 1; }
.tile { justify-content: center; width: 80px; margin: 0 9px; border: solid transparent; border-width: 4px 0; }
.tile-wide { width: 102px; margin: 0; padding-right: 6px; }
.tile-current { width: 96px; margin: 0; background: #33454e; border-color: #33454e; border-bottom-color: #68a3da; }
.tile-plain { margin: 0 5px 0 10px; }
.tile-plain + .tile { margin-left: 12px; }
.tile-open { border-bottom-color: #68a3da; }
.tray { display: flex; align-items: center; gap: 18px; margin-left: auto; padding-right: 7px; }
.clock { width: 120px; margin-left: -8px; font-size: 22px; line-height: 36px; text-align: center; }
.notes { position: relative; width: 56px; margin-left: 8px; }
.count { position: absolute; left: 14px; top: 10px; width: 34px; height: 34px; border: 2px solid #777; border-radius: 50%; background: #23262b; font-size: 20px; line-height: 30px; text-align: center; }
.peek { width: 2px; height: 80px; background: #666f78; }
```
